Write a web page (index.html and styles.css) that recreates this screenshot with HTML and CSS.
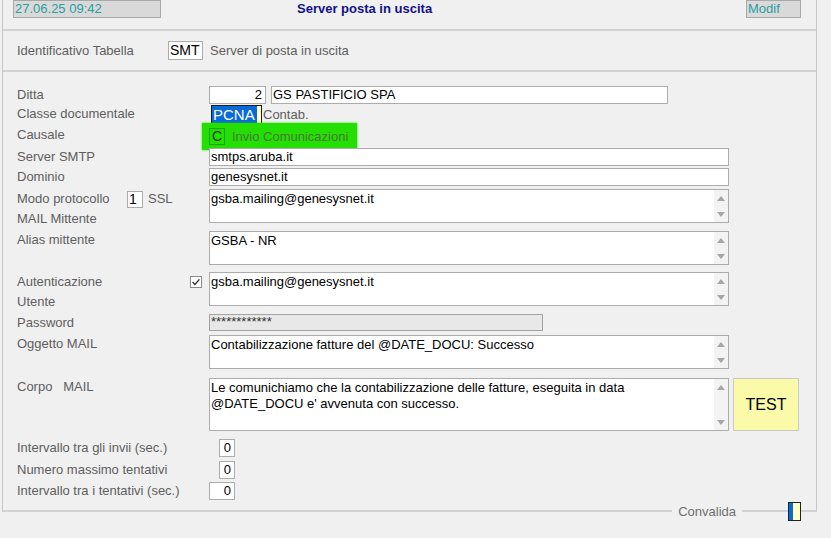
FILE: index.html
```html
<!DOCTYPE html>
<html lang="it">
<head>
  <meta charset="UTF-8" />
  <title>Server posta in uscita</title>
  <link rel="stylesheet" href="styles.css">
</head>
<body>
  <div class="frame">
    <div class="topbar">
      <div class="stamp">27.06.25 09:42</div>
      <div class="title">Server posta in uscita</div>
      <div class="mode">Modif</div>
    </div>

    <div class="idrow">
      <span class="idlabel">Identificativo Tabella</span>
      <span class="box code">SMT</span>
      <span class="desc">Server di posta in uscita</span>
    </div>

    <div class="main">
      <div class="row">
        <div class="lbl">Ditta</div>
        <div class="box num w-ditta">2</div>
        <div class="box w-name">GS PASTIFICIO SPA</div>
      </div>

      <div class="row mt1">
        <div class="lbl">Classe documentale</div>
        <div class="sel"><span>PCNA</span></div>
        <span class="desc tight">Contab.</span>
      </div>

      <div class="row causale">
        <div class="lbl">Causale</div>
        <div class="hl">
          <span class="cbox">C</span>
          <span class="hltext">Invio Comunicazioni</span>
        </div>
      </div>

      <div class="row">
        <div class="lbl">Server SMTP</div>
        <div class="box w-full">smtps.aruba.it</div>
      </div>

      <div class="row mt2">
        <div class="lbl">Dominio</div>
        <div class="box w-full">genesysnet.it</div>
      </div>

      <div class="row mt3">
        <div class="lbl stack">
          <div class="line">
            <span class="proto">Modo protocollo</span>
            <span class="box small">1</span>
            <span class="ssl">SSL</span>
          </div>
          <div class="line">MAIL Mittente</div>
        </div>
        <div class="area">
          <div class="txt">gsba.mailing@genesysnet.it</div>
          <div class="sb"></div>
        </div>
      </div>

      <div class="row mt8">
        <div class="lbl">Alias mittente</div>
        <div class="area">
          <div class="txt">GSBA - NR</div>
          <div class="sb"></div>
        </div>
      </div>

      <div class="row mt7">
        <div class="lbl stack">
          <div class="line">
            <span>Autenticazione</span>
            <svg class="check" width="12" height="12" viewBox="0 0 12 12">
              <rect x="0.5" y="0.5" width="11" height="11" fill="#fff" stroke="#8a8a8a"/>
              <path d="M2.6 6.1 L4.9 8.4 L9.4 3.4" fill="none" stroke="#333" stroke-width="1.4"/>
            </svg>
          </div>
          <div class="line">Utente</div>
        </div>
        <div class="area">
          <div class="txt">gsba.mailing@genesysnet.it</div>
          <div class="sb"></div>
        </div>
      </div>

      <div class="row mt8">
        <div class="lbl">Password</div>
        <div class="box pwd">************</div>
      </div>

      <div class="row mt3">
        <div class="lbl">Oggetto MAIL</div>
        <div class="area">
          <div class="txt">Contabilizzazione fatture del @DATE_DOCU: Successo</div>
          <div class="sb"></div>
        </div>
      </div>

      <div class="row mt9">
        <div class="lbl">Corpo&nbsp;&nbsp; MAIL</div>
        <div class="area tall">
          <div class="txt">Le comunichiamo che la contabilizzazione delle fatture, eseguita in data<br>@DATE_DOCU e' avvenuta con successo.</div>
          <div class="sb"></div>
        </div>
        <button class="test">TEST</button>
      </div>

      <div class="row mt8">
        <div class="lbl">Intervallo tra gli invii (sec.)</div>
        <div class="box num w-short">0</div>
      </div>

      <div class="row mt4">
        <div class="lbl">Numero massimo tentativi</div>
        <div class="box num w-short">0</div>
      </div>

      <div class="row mt3">
        <div class="lbl">Intervallo tra i tentativi (sec.)</div>
        <div class="box num w-mid">0</div>
      </div>
    </div>
  </div>

  <div class="footer">
    <span class="confirm">Convalida</span>
    <span class="flag"><span></span></span>
  </div>
</body>
</html>
```

FILE: styles.css
```css
/* Basic Reset */
* {
  box-sizing: border-box;
  margin: 0;
  padding: 0;
}
body {
  font-family: "Liberation Sans", Arial, sans-serif;
  font-size: 13px;
  background-color: #f0f0f0;
  color: #000;
}
.frame {
  margin-left: 2px;
  width: 815px;
  border-left: 1px solid #c6c6c6;
  border-right: 1px solid #c6c6c6;
  border-bottom: 2px solid #d2d2d2;
}

/* top bar */
.topbar {
  display: flex;
  align-items: flex-start;
  height: 29px;
  padding: 0 15px 0 10px;
}
.stamp,
.mode {
  height: 18px;
  line-height: 16px;
  padding-left: 1px;
  background-color: #d9d9d9;
  border: 1px solid #a8a8a8;
  color: #2a9ea0;
}
.stamp {
  width: 148px;
}
.mode {
  width: 55px;
  margin-left: auto;
}
.title {
  margin-left: 136px;
  line-height: 18px;
  font-weight: bold;
  color: #12128a;
}

/* table id */
.idrow {
  display: flex;
  align-items: center;
  height: 41px;
  padding-left: 14px;
  border-top: 2px solid #d2d2d2;
}
.idlabel {
  width: 151px;
  color: #5e5e5e;
}
.desc {
  margin-left: 7px;
  color: #5e5e5e;
}
.desc.tight {
  margin-left: 1px;
  line-height: 19px;
}

/* main form */
.main {
  border-top: 2px solid #d2d2d2;
  padding: 14px 0 10px 14px;
}
.row {
  display: flex;
  align-items: flex-start;
}
.mt1 { margin-top: 1px; }
.mt2 { margin-top: 2px; }
.mt3 { margin-top: 3px; }
.mt4 { margin-top: 4px; }
.mt7 { margin-top: 7px; }
.mt8 { margin-top: 8px; }
.mt9 { margin-top: 9px; }

.lbl {
  width: 192px;
  height: 18px;
  line-height: 18px;
  color: #5e5e5e;
  flex-shrink: 0;
}
.lbl.stack .line {
  display: flex;
  align-items: center;
  height: 20px;
}
.proto {
  width: 110px;
}
.ssl {
  margin-left: 5px;
}
.check {
  margin-left: auto;
  margin-right: 7px;
}

.box {
  height: 18px;
  line-height: 16px;
  padding: 0 1px;
  background-color: #fff;
  border: 1px solid #acacac;
  color: #000;
}
.box.num {
  text-align: right;
  padding-right: 3px;
}
.code {
  width: 35px;
  height: 19px;
  line-height: 17px;
  font-size: 14px;
}
.small {
  width: 16px;
  height: 17px;
  line-height: 15px;
  font-size: 14px;
  color: #000;
}
.w-ditta { width: 57px; }
.w-name { width: 397px; margin-left: 5px; }
.w-full { width: 520px; }
.w-short { width: 16px; margin-left: 10px; }
.w-mid { width: 26px; }
.pwd {
  width: 334px;
  height: 17px;
  line-height: 13px;
  background-color: #e8e8e8;
  border-color: #a4a4a4;
  color: #333;
}

/* selected class code */
.sel {
  display: flex;
  width: 51px;
  height: 19px;
  margin-left: 2px;
  border: 1px solid #1c1c1c;
  background-color: #ffffc6;
}
.sel span {
  width: 45px;
  padding-left: 1px;
  background-color: #0a6bd6;
  color: #fff;
  font-size: 15px;
  line-height: 17px;
}

/* highlighted causale */
.causale {
  height: 24px;
}
.causale .lbl {
  height: 22px;
  line-height: 22px;
}
.hl {
  display: flex;
  align-items: center;
  width: 155px;
  height: 27px;
  margin: -1px 0 0 -7px;
  padding-left: 7px;
  background-color: #25de04;
  box-shadow: 0 0 2px #25de04;
}
.cbox {
  width: 16px;
  height: 17px;
  line-height: 15px;
  padding-left: 2px;
  font-size: 14px;
  border: 1px solid #18a600;
  color: #163a0c;
}
.hltext {
  margin-left: 7px;
  color: #477a35;
}

/* multi-line fields */
.area {
  display: flex;
  width: 520px;
  height: 34px;
  background-color: #fff;
  border: 1px solid #acacac;
}
.area.tall {
  height: 53px;
}
.area .txt {
  flex: 1;
  padding: 1px 1px 0;
  line-height: 16px;
}
.sb {
  display: flex;
  flex-direction: column;
  justify-content: space-between;
  align-items: center;
  width: 14px;
  padding: 6px 0 5px;
  background-color: #f3f3f3;
}
.sb::before,
.sb::after {
  content: "";
  width: 0;
  height: 0;
  border-left: 4px solid transparent;
  border-right: 4px solid transparent;
}
.sb::before {
  border-bottom: 5px solid #a6a6a6;
}
.sb::after {
  border-top: 5px solid #a6a6a6;
}

.test {
  width: 66px;
  height: 53px;
  margin-left: 4px;
  font-family: inherit;
  font-size: 16px;
  background-color: #fafaa9;
  border: 1px solid #c9c9c9;
  color: #000;
  cursor: pointer;
}

/* bottom line */
.footer {
  display: flex;
  justify-content: flex-end;
  align-items: center;
  width: 815px;
  height: 19px;
  margin: -10px 0 0 2px;
  padding-right: 16px;
}
.confirm {
  padding: 0 6px;
  margin-right: 46px;
  background-color: #f0f0f0;
  color: #6e6e6e;
}
.flag {
  display: flex;
  width: 13px;
  height: 19px;
  border: 1px solid #222;
  background-color: #ffffc6;
}
.flag span {
  width: 4px;
  background-color: #0a6bd6;
}
```
